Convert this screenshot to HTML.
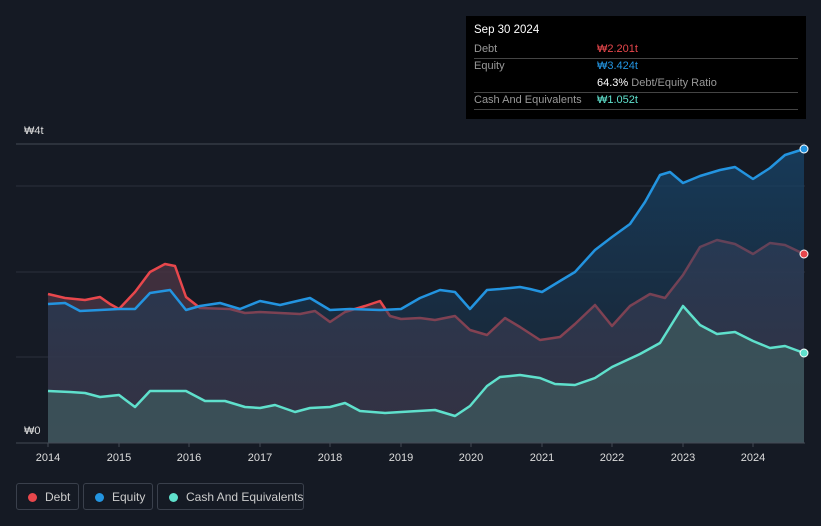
<!DOCTYPE html>
<html><head><meta charset="utf-8"><style>
body{margin:0;background:#151a24;width:821px;height:526px;overflow:hidden;font-family:"Liberation Sans","Noto Sans CJK KR",sans-serif;position:relative}
.tt{position:absolute;left:466px;top:16px;width:340px;height:103px;background:#000;color:#999;font-size:11px}
.tt .r{position:absolute;left:8px;right:8px;border-bottom:1px solid #444;height:17px;line-height:17px}
.tt .v{position:absolute;left:123px}
.leg{position:absolute;top:483px;height:27px;border:1px solid #3a404c;border-radius:3px;color:#ccc;font-size:12px;line-height:27px;box-sizing:border-box;white-space:nowrap}
.leg i{position:absolute;left:11px;top:9px;width:9px;height:9px;border-radius:50%}
.ax{position:absolute;color:#ddd;font-size:11px}
</style></head><body>
<svg width="821" height="526" style="position:absolute;left:0;top:0">
<line x1="16" y1="144" x2="805" y2="144" stroke="#444a55"/>
<line x1="16" y1="186" x2="805" y2="186" stroke="#2a303b"/>
<line x1="16" y1="272" x2="805" y2="272" stroke="#2a303b"/>
<line x1="16" y1="357" x2="805" y2="357" stroke="#2a303b"/>
<defs><linearGradient id="eg" x1="0" y1="0" x2="0" y2="1"><stop offset="0" stop-color="#174266" stop-opacity=".8"/><stop offset="1" stop-color="#1d3850" stop-opacity=".3"/></linearGradient></defs>
<polygon fill="#4a3444" fill-opacity=".8" points="48,443 48,294 65,298 85,300 100,297 110,304 119,309 135,292 150,272 165,264 175,266 186,297 200,308 230,309 245,313 260,312 300,314 315,311 330,322 345,312 365,306 380,301 390,316 401,319 420,318 435,320 455,316 470,330 487,335 505,318 520,327 540,340 560,337 575,324 595,305 612,326 630,306 650,294 665,298 683,275 700,247 717,240 735,244 753,254 770,243 785,245 804,254 804,443"/>
<polyline fill="none" stroke="#e8474c" stroke-width="2.5" stroke-linejoin="round" points="48,294 65,298 85,300 100,297 110,304 119,309 135,292 150,272 165,264 175,266 186,297 200,308 230,309 245,313 260,312 300,314 315,311 330,322 345,312 365,306 380,301 390,316 401,319 420,318 435,320 455,316 470,330 487,335 505,318 520,327 540,340 560,337 575,324 595,305 612,326 630,306 650,294 665,298 683,275 700,247 717,240 735,244 753,254 770,243 785,245 804,254"/>
<polygon fill="url(#eg)" points="48,443 48,304 65,303 80,311 100,310 119,309 135,309 150,293 170,290 186,310 200,306 220,303 240,309 260,301 280,305 310,298 330,310 350,309 380,310 401,309 420,298 440,290 455,292 470,309 487,290 500,289 520,287 530,289 542,292 560,281 575,272 595,250 612,237 630,224 645,202 660,175 670,172 683,183 700,176 720,170 735,167 753,179 770,168 785,155 804,149 804,443"/>
<polyline fill="none" stroke="#2394e0" stroke-width="2.5" stroke-linejoin="round" points="48,304 65,303 80,311 100,310 119,309 135,309 150,293 170,290 186,310 200,306 220,303 240,309 260,301 280,305 310,298 330,310 350,309 380,310 401,309 420,298 440,290 455,292 470,309 487,290 500,289 520,287 530,289 542,292 560,281 575,272 595,250 612,237 630,224 645,202 660,175 670,172 683,183 700,176 720,170 735,167 753,179 770,168 785,155 804,149"/>
<polygon fill="#3e5a5e" fill-opacity=".75" points="48,443 48,391 70,392 85,393 100,397 119,395 135,407 150,391 186,391 205,401 225,401 245,407 260,408 275,405 295,412 310,408 330,407 345,403 360,411 385,413 401,412 435,410 455,416 470,406 487,386 500,377 520,375 540,378 555,384 575,385 595,378 612,367 640,354 660,343 683,306 700,325 717,334 735,332 753,341 770,348 785,346 804,353 804,443"/>
<polyline fill="none" stroke="#5fe0cc" stroke-width="2.5" stroke-linejoin="round" points="48,391 70,392 85,393 100,397 119,395 135,407 150,391 186,391 205,401 225,401 245,407 260,408 275,405 295,412 310,408 330,407 345,403 360,411 385,413 401,412 435,410 455,416 470,406 487,386 500,377 520,375 540,378 555,384 575,385 595,378 612,367 640,354 660,343 683,306 700,325 717,334 735,332 753,341 770,348 785,346 804,353"/>
<line x1="16" y1="443" x2="805" y2="443" stroke="#444a55"/>
<g stroke="#444a55"><line x1="48" y1="443" x2="48" y2="447"/><line x1="119" y1="443" x2="119" y2="447"/><line x1="189" y1="443" x2="189" y2="447"/><line x1="260" y1="443" x2="260" y2="447"/><line x1="330" y1="443" x2="330" y2="447"/><line x1="401" y1="443" x2="401" y2="447"/><line x1="471" y1="443" x2="471" y2="447"/><line x1="542" y1="443" x2="542" y2="447"/><line x1="612" y1="443" x2="612" y2="447"/><line x1="683" y1="443" x2="683" y2="447"/><line x1="753" y1="443" x2="753" y2="447"/></g>
<circle cx="804" cy="149" r="4" fill="#2394e0" stroke="#fff" stroke-width="1"/>
<circle cx="804" cy="254" r="4" fill="#e8474c" stroke="#fff" stroke-width="1"/>
<circle cx="804" cy="353" r="4" fill="#5fe0cc" stroke="#fff" stroke-width="1"/>
<g fill="#ddd" font-size="11" font-family="Liberation Sans,sans-serif" text-anchor="middle">
<text x="48" y="461">2014</text><text x="119" y="461">2015</text><text x="189" y="461">2016</text><text x="260" y="461">2017</text><text x="330" y="461">2018</text><text x="401" y="461">2019</text><text x="471" y="461">2020</text><text x="542" y="461">2021</text><text x="612" y="461">2022</text><text x="683" y="461">2023</text><text x="753" y="461">2024</text></g>
</svg>
<div class="ax" style="left:24px;top:125px">₩4t</div>
<div class="ax" style="left:24px;top:425px">₩0</div>
<div class="tt">
<div style="position:absolute;left:8px;top:8px;color:#fff;font-size:11.5px">Sep 30 2024</div>
<div class="r" style="top:25px">Debt<span class="v" style="color:#e8474c">₩2.201t</span></div>
<div class="r" style="top:42px;border:none">Equity<span class="v" style="color:#2394e0">₩3.424t</span></div>
<div class="r" style="top:59px"><span class="v"><b style="color:#fff;font-weight:normal">64.3%</b> Debt/Equity Ratio</span></div>
<div class="r" style="top:76px">Cash And Equivalents<span class="v" style="color:#5fe0cc">₩1.052t</span></div>
</div>
<div class="leg" style="left:16px;width:63px"><i style="background:#e8474c"></i><span style="position:absolute;left:28px">Debt</span></div>
<div class="leg" style="left:83px;width:70px"><i style="background:#2394e0"></i><span style="position:absolute;left:28px">Equity</span></div>
<div class="leg" style="left:157px;width:147px"><i style="background:#5fe0cc"></i><span style="position:absolute;left:28px">Cash And Equivalents</span></div>
</body></html>
